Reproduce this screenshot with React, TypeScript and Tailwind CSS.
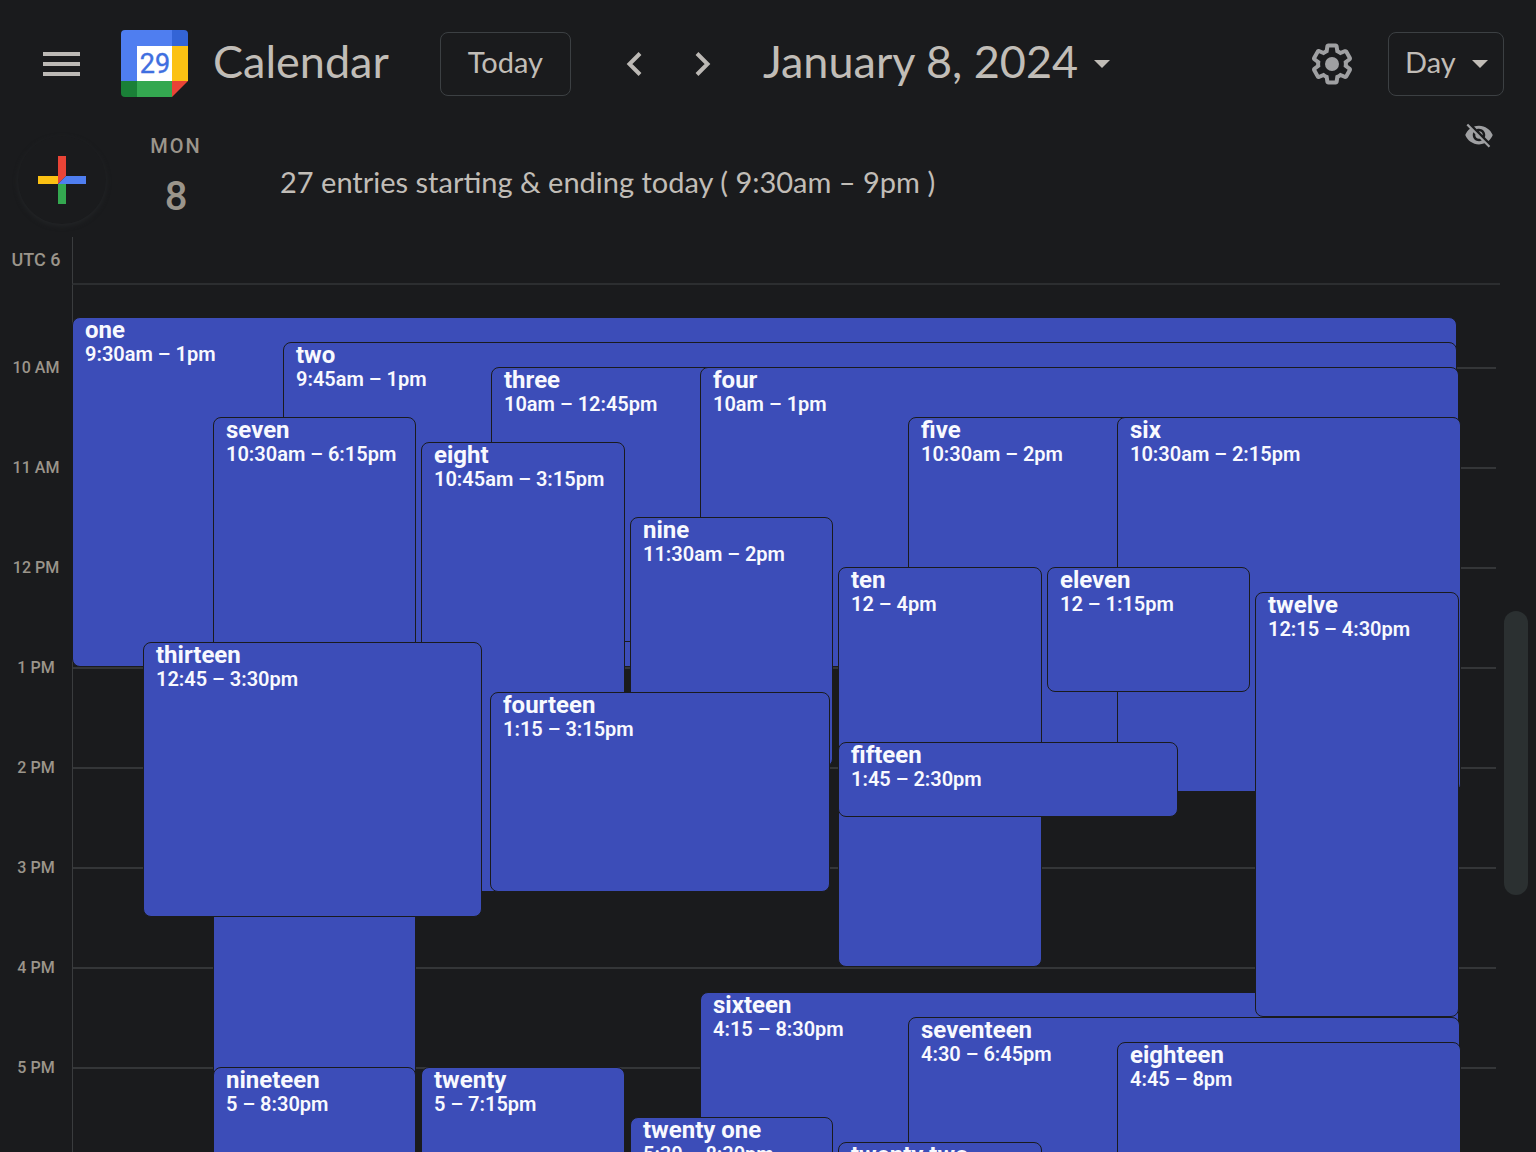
import React from "react";

const HOUR = 100;
const DAY_START = 9.18;
const GRID_WIDTH = 1423;

type CalendarEvent = {
  title: string;
  time: string;
  start: number;
  end: number;
  left: number;
  right: number;
};

const events: CalendarEvent[] = [
  { title: "one", time: "9:30am – 1pm", start: 9.5, end: 13, left: -1, right: 1384 },
  { title: "two", time: "9:45am – 1pm", start: 9.75, end: 13, left: 210, right: 1384 },
  { title: "three", time: "10am – 12:45pm", start: 10, end: 12.75, left: 418, right: 1384 },
  { title: "four", time: "10am – 1pm", start: 10, end: 13, left: 627, right: 1386 },
  { title: "five", time: "10:30am – 2pm", start: 10.5, end: 14, left: 835, right: 1387 },
  { title: "six", time: "10:30am – 2:15pm", start: 10.5, end: 14.25, left: 1044, right: 1388 },
  { title: "seven", time: "10:30am – 6:15pm", start: 10.5, end: 18.25, left: 140, right: 343 },
  { title: "eight", time: "10:45am – 3:15pm", start: 10.75, end: 15.25, left: 348, right: 552 },
  { title: "nine", time: "11:30am – 2pm", start: 11.5, end: 14, left: 557, right: 760 },
  { title: "ten", time: "12 – 4pm", start: 12, end: 16, left: 765, right: 969 },
  { title: "eleven", time: "12 – 1:15pm", start: 12, end: 13.25, left: 974, right: 1177 },
  { title: "sixteen", time: "4:15 – 8:30pm", start: 16.25, end: 20.5, left: 627, right: 1386 },
  { title: "twelve", time: "12:15 – 4:30pm", start: 12.25, end: 16.5, left: 1182, right: 1386 },
  { title: "thirteen", time: "12:45 – 3:30pm", start: 12.75, end: 15.5, left: 70, right: 409 },
  { title: "fourteen", time: "1:15 – 3:15pm", start: 13.25, end: 15.25, left: 417, right: 757 },
  { title: "fifteen", time: "1:45 – 2:30pm", start: 13.75, end: 14.5, left: 765, right: 1105 },
  { title: "seventeen", time: "4:30 – 6:45pm", start: 16.5, end: 18.75, left: 835, right: 1387 },
  { title: "eighteen", time: "4:45 – 8pm", start: 16.75, end: 20, left: 1044, right: 1388 },
  { title: "nineteen", time: "5 – 8:30pm", start: 17, end: 20.5, left: 140, right: 343 },
  { title: "twenty", time: "5 – 7:15pm", start: 17, end: 19.25, left: 348, right: 552 },
  { title: "twenty one", time: "5:30 – 8:30pm", start: 17.5, end: 20.5, left: 557, right: 760 },
  { title: "twenty two", time: "5:45 – 9pm", start: 17.75, end: 21, left: 765, right: 969 },
];

const hours = ["10 AM", "11 AM", "12 PM", "1 PM", "2 PM", "3 PM", "4 PM", "5 PM"];

function Logo() {
  return (
    <svg className="size-[68px]" viewBox="0 0 68 68" aria-hidden="true">
      <path d="M4 0h48v16H16v35H0V4a4 4 0 0 1 4-4z" fill="#4f7ef0" />
      <path d="M51 0h12a4 4 0 0 1 4 4v12H51z" fill="#3364d6" />
      <path d="M51 16h16v35H51z" fill="#fbc113" />
      <path d="M0 51h16v16H4a4 4 0 0 1-4-4z" fill="#1a8037" />
      <path d="M16 51h35v16H16z" fill="#34a850" />
      <path d="M51 51h16L51 67z" fill="#e94436" />
      <path d="M16 16h35v35H16z" fill="#fff" />
      <text x="34" y="43" textAnchor="middle" fontFamily="Roboto, sans-serif" fontSize="27" fontWeight="400" fill="#3f6fe0" stroke="#3f6fe0" strokeWidth="0.4">
        29
      </text>
    </svg>
  );
}

function Caret() {
  return (
    <svg className="h-2 w-4 shrink-0" viewBox="0 0 16 8" fill="#c1bdb7" aria-hidden="true">
      <path d="M0 0h16L8 8z" />
    </svg>
  );
}

function Header() {
  return (
    <header className="flex h-32 shrink-0 items-center pl-[43px] pr-8 text-[#c1bdb7]">
      <button aria-label="Main menu" className="flex w-[37px] flex-col gap-1.5">
        <span className="h-1 bg-[#bcb9b5]" />
        <span className="h-1 bg-[#bcb9b5]" />
        <span className="h-1 bg-[#bcb9b5]" />
      </button>
      <a href="#" className="ml-[41px] flex items-center gap-6">
        <Logo />
        <span className="pb-1 text-[45px]">Calendar</span>
      </a>
      <button className="ml-[51px] h-16 w-[131px] rounded-lg border border-[#3c4043] pb-1 text-[29px]">Today</button>
      <button aria-label="Previous day" className="ml-12 flex size-8 items-center justify-center">
        <svg className="size-8" viewBox="0 0 32 32" fill="none" stroke="#bcb9b5" strokeWidth="4">
          <path d="M21 5.500 10.500 16 21 26.500" />
        </svg>
      </button>
      <button aria-label="Next day" className="ml-9 flex size-8 items-center justify-center">
        <svg className="size-8" viewBox="0 0 32 32" fill="none" stroke="#bcb9b5" strokeWidth="4">
          <path d="M10 5.500 20.500 16 10 26.500" />
        </svg>
      </button>
      <button className="ml-11 flex items-center gap-4 whitespace-nowrap text-[45px]">
        <span className="pb-1">January 8, 2024</span>
        <Caret />
      </button>
      <button aria-label="Settings" className="ml-auto">
        <svg className="size-12" viewBox="0 0 24 24" fill="#9fa0a2">
          <path d="M13.85 22.25h-3.7c-.74 0-1.36-.54-1.45-1.27l-.27-1.89c-.27-.14-.53-.29-.79-.46l-1.8.72c-.7.26-1.47-.03-1.81-.65L2.2 15.53c-.35-.66-.2-1.44.36-1.88l1.53-1.19c-.01-.15-.02-.3-.02-.46 0-.15.01-.31.02-.46l-1.52-1.19c-.59-.45-.74-1.26-.37-1.88l1.85-3.19c.34-.62 1.11-.9 1.79-.63l1.81.73c.26-.17.52-.32.78-.46l.27-1.91c.09-.7.71-1.25 1.44-1.25h3.7c.74 0 1.36.54 1.45 1.27l.27 1.89c.27.14.53.29.79.46l1.8-.72c.71-.26 1.48.03 1.82.65l1.84 3.18c.36.66.2 1.44-.36 1.88l-1.52 1.19c.01.15.02.3.02.46s-.01.31-.02.46l1.52 1.19c.56.45.72 1.23.37 1.86l-1.86 3.22c-.34.62-1.11.9-1.8.63l-1.8-.72c-.26.17-.52.32-.78.46l-.27 1.91c-.1.68-.72 1.22-1.46 1.22zm-3.23-2h2.76l.37-2.55.53-.22c.44-.18.88-.44 1.34-.78l.45-.34 2.38.96 1.38-2.4-2.03-1.58.07-.56c.03-.26.06-.51.06-.78s-.03-.53-.06-.78l-.07-.56 2.03-1.58-1.39-2.4-2.39.96-.45-.35c-.42-.32-.87-.58-1.33-.77l-.52-.22-.37-2.55h-2.76l-.37 2.55-.53.21c-.44.19-.88.44-1.34.79l-.45.33-2.38-.95-1.39 2.39 2.03 1.58-.07.56a7 7 0 0 0-.06.79c0 .26.02.53.06.78l.07.56-2.03 1.58 1.38 2.4 2.39-.96.45.35c.43.33.86.58 1.33.77l.53.22.38 2.55z" />
          <circle cx="12" cy="12" r="3.5" />
        </svg>
      </button>
      <div className="relative ml-8">
        <select
          aria-label="View"
          className="h-16 w-[116px] appearance-none rounded-lg border border-[#3c4043] bg-transparent pb-1 pl-4 text-[29px] outline-none"
        >
          <option>Day</option>
        </select>
        <span className="pointer-events-none absolute inset-y-0 right-4 flex items-center">
          <Caret />
        </span>
      </div>
    </header>
  );
}

function DayBar() {
  return (
    <section className="flex h-[109px] shrink-0 items-start">
      <button
        aria-label="Create"
        className="ml-[18px] mt-2 flex size-[88px] items-center justify-center rounded-full shadow-[0_2px_5px_#232527]"
      >
        <svg className="size-12" viewBox="0 0 48 48">
          <path d="M20 0h8v20l-8 8z" fill="#e94436" />
          <path d="M20 28h8v20h-8z" fill="#34a850" />
          <path d="M0 20h20v8H0z" fill="#fbc113" />
          <path d="M28 20h20v8H20z" fill="#4f7ef0" />
        </svg>
      </button>
      <div className="ml-[26px] flex w-[88px] flex-col items-center pt-1.5 font-[Roboto] font-medium text-[#9b958b]">
        <span className="text-xl leading-6 tracking-[2px]">MON</span>
        <span className="mt-4 text-[40px] leading-[46px]">8</span>
      </div>
      <p className="ml-[60px] mt-9 text-[29px] leading-9 text-[#c1bdb7]">
        27 entries starting &amp; ending today ( 9:30am – 9pm )
      </p>
      <button aria-label="Toggle visibility" className="-mt-2 ml-auto mr-[42px]">
        <svg className="size-[30px]" viewBox="0 0 24 24" fill="#9fa0a2">
          <path d="M12 7c2.76 0 5 2.24 5 5 0 .65-.13 1.26-.36 1.83l2.92 2.92c1.51-1.26 2.7-2.89 3.43-4.75-1.73-4.39-6-7.5-11-7.5-1.4 0-2.74.25-3.98.7l2.16 2.16C10.74 7.13 11.35 7 12 7zM2 4.27l2.28 2.28.46.46C3.08 8.3 1.78 10.02 1 12c1.73 4.39 6 7.5 11 7.5 1.55 0 3.03-.3 4.38-.84l.42.42L19.73 22 21 20.73 3.27 3 2 4.27zM7.53 9.8l1.55 1.55c-.05.21-.08.43-.08.65 0 1.66 1.34 3 3 3 .22 0 .44-.03.65-.08l1.55 1.55c-.67.33-1.41.53-2.2.53-2.76 0-5-2.24-5-5 0-.79.2-1.53.53-2.2zm4.31-.78 3.15 3.15.02-.16c0-1.66-1.34-3-3-3l-.17.01z" />
        </svg>
      </button>
    </section>
  );
}

function EventCard({ event }: { event: CalendarEvent }) {
  return (
    <button
      className="absolute flex flex-col items-start justify-start overflow-hidden rounded-lg border border-[#1a1b1d] bg-[#3c4db8] pl-3 text-left font-[Roboto] text-[#f8f9fe]"
      style={{
        top: (event.start - DAY_START) * HOUR,
        height: (event.end - event.start) * HOUR,
        left: `${(event.left / GRID_WIDTH) * 100}%`,
        width: `${((event.right - event.left) / GRID_WIDTH) * 100}%`,
      }}
    >
      <span className="whitespace-nowrap text-2xl leading-6 font-bold">{event.title}</span>
      <span className="whitespace-nowrap text-xl leading-6 font-semibold">{event.time}</span>
    </button>
  );
}

export default function App() {
  return (
    <div className="flex h-screen flex-col overflow-hidden bg-[#1a1b1d] font-[Lato,sans-serif]">
      <Header />
      <DayBar />
      <section className="flex h-12 shrink-0">
        <div className="flex w-[72px] items-center justify-center pb-0.5 font-[Roboto] text-lg font-medium text-[#9b958b]">
          UTC 6
        </div>
        <div className="mr-9 flex-1 border-b-2 border-l border-b-[#2c2e30] border-l-[#3a3c3e]" />
      </section>
      <main className="flex min-h-0 flex-1 overflow-hidden">
        <div className="w-[72px] shrink-0 pt-8 text-center font-[Roboto] text-base font-medium text-[#9b958b]">
          {hours.map((hour) => (
            <div key={hour} className="h-[100px] pt-10 leading-[22px]">
              {hour}
            </div>
          ))}
        </div>
        <div className="relative flex-1 border-l border-[#3a3c3e]">
          <div className="h-[82px]" />
          {hours.map((hour) => (
            <div key={hour} className="h-[100px] border-t-2 border-[#343638]" />
          ))}
          {events.map((event) => (
            <EventCard key={event.title} event={event} />
          ))}
        </div>
        <div className="w-10 shrink-0 pl-2 pt-[326px]">
          <div className="h-[284px] w-6 rounded-full bg-[#2b3031]" />
        </div>
      </main>
    </div>
  );
}
